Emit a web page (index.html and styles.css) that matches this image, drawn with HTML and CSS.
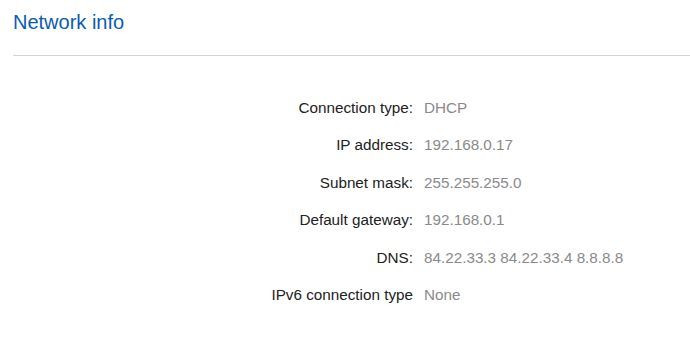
FILE: index.html
```html
<!DOCTYPE html>
<html lang="en">
<head>
    <meta charset="UTF-8">
    <meta name="viewport" content="width=device-width, initial-scale=1.0">
    <title>Network info</title>
    <link rel="stylesheet" href="styles.css">
</head>
<body>
    <header class="panel-header">
        <h1>Network info</h1>
    </header>

    <main class="info-list">
        <div class="label">Connection type:</div>
        <div class="value">DHCP</div>

        <div class="label">IP address:</div>
        <div class="value">192.168.0.17</div>

        <div class="label">Subnet mask:</div>
        <div class="value">255.255.255.0</div>

        <div class="label">Default gateway:</div>
        <div class="value">192.168.0.1</div>

        <div class="label">DNS:</div>
        <div class="value">84.22.33.3 84.22.33.4 8.8.8.8</div>

        <div class="label">IPv6 connection type</div>
        <div class="value">None</div>
    </main>
</body>
</html>
```

FILE: styles.css
```css
:root {
    --title: #0a5bb4;
    --label: #222222;
    --value: #8a8a8a;
    --rule: #d2d2d2;
}

* {
    margin: 0;
    padding: 0;
    box-sizing: border-box;
}

body {
    background: #fff;
    font-family: 'Liberation Sans', Arial, sans-serif;
    color: var(--label);
}

/* Header */
.panel-header {
    margin-left: 13px;
    padding: 11px 0 21px 0;
    border-bottom: 1px solid var(--rule);
}

.panel-header h1 {
    font-size: 20px;
    line-height: 23px;
    font-weight: 400;
    color: var(--title);
}

/* Info rows */
.info-list {
    display: grid;
    grid-template-columns: 413px 1fr;
    column-gap: 11px;
    margin-top: 33px;
    font-size: 15.25px;
    line-height: 37.4px;
}

.label {
    text-align: right;
    color: var(--label);
}

.value {
    color: var(--value);
}
```
